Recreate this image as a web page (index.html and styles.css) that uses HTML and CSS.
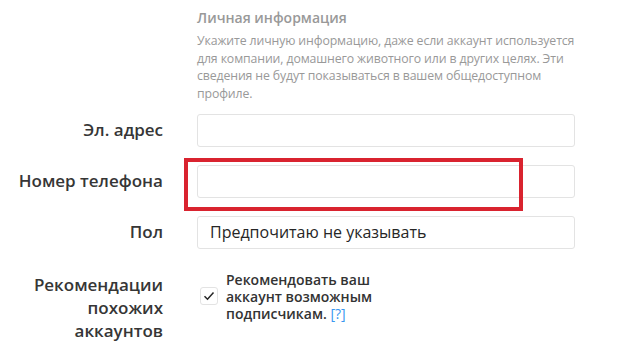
FILE: index.html
```html
<!DOCTYPE html>
<html lang="ru">

<head>
    <meta charset="UTF-8">
    <meta name="viewport" content="width=device-width, initial-scale=1.0">
    <title>Редактировать профиль</title>
    <link rel="stylesheet" href="styles.css">
</head>

<body>

    <form class="profile-form">
        <div class="form-row intro-row">
            <div class="form-label"></div>
            <div class="form-field">
                <h2 class="section-title">Личная информация</h2>
                <p class="section-hint">Укажите личную информацию, даже если аккаунт используется для компании, домашнего животного или в других целях. Эти сведения не будут показываться в вашем общедоступном профиле.</p>
            </div>
        </div>

        <div class="form-row">
            <label class="form-label" for="email">Эл. адрес</label>
            <div class="form-field">
                <input class="text-input" type="text" id="email">
            </div>
        </div>

        <div class="form-row">
            <label class="form-label" for="phone">Номер телефона</label>
            <div class="form-field">
                <input class="text-input" type="text" id="phone">
                <span class="highlight-box"></span>
            </div>
        </div>

        <div class="form-row">
            <label class="form-label" for="gender">Пол</label>
            <div class="form-field">
                <input class="text-input" type="text" id="gender" value="Предпочитаю не указывать" readonly>
            </div>
        </div>

        <div class="form-row check-row">
            <label class="form-label multi" for="suggest">Рекомендации похожих аккаунтов</label>
            <div class="form-field check-field">
                <span class="checkbox">
                    <svg width="12" height="10" viewBox="0 0 12 10">
                        <path d="M1.5 5.2 L4.5 8.2 L10.5 1.5" fill="none" stroke="#262626" stroke-width="1.5" />
                    </svg>
                </span>
                <p class="check-text">Рекомендовать ваш аккаунт возможным подписчикам. <a href="#" class="help-link">[?]</a></p>
            </div>
        </div>
    </form>

</body>

</html>
```

FILE: styles.css
```css
/* Global Styling */
body {
    font-family: 'Open Sans', 'Noto Sans', sans-serif;
    margin: 0;
    padding: 0;
    background-color: #fff;
    color: #262626;
}

.profile-form {
    display: flex;
    flex-direction: column;
    padding-top: 8px;
}

/* Rows: label column + field column */
.form-row {
    display: grid;
    grid-template-columns: 163px 378px;
    column-gap: 34px;
    align-items: center;
    margin-bottom: 18px;
}

.form-label {
    text-align: right;
    font-size: 17px;
    font-weight: 600;
    line-height: 22px;
    color: #363636;
}

.form-field {
    position: relative;
}

/* Section intro */
.intro-row {
    margin-bottom: 11px;
}

.section-title {
    margin: 0 0 4px;
    font-size: 14px;
    font-weight: 600;
    line-height: 20px;
    color: #999;
}

.section-hint {
    margin: 0;
    font-size: 12.3px;
    letter-spacing: -0.12px;
    line-height: 17.7px;
    color: #999;
}

/* Inputs */
.text-input {
    display: block;
    box-sizing: border-box;
    width: 100%;
    height: 33px;
    padding: 0 12px;
    border: 1px solid #e3e3e3;
    border-radius: 3px;
    background: #fff;
    font-family: inherit;
    font-size: 16px;
    color: #262626;
    outline: none;
}

/* Red mark drawn over the phone field */
.highlight-box {
    position: absolute;
    left: -13px;
    top: -7px;
    width: 339px;
    height: 53px;
    box-sizing: border-box;
    border: 4px solid #d9232f;
    pointer-events: none;
}

/* Checkbox row */
.check-row {
    align-items: start;
    margin-top: 4px;
}

.form-label.multi {
    justify-self: end;
    max-width: 130px;
    line-height: 23px;
    padding-top: 2px;
}

.check-field {
    display: flex;
    align-items: center;
    gap: 8px;
}

.checkbox {
    display: flex;
    align-items: center;
    justify-content: center;
    width: 16px;
    height: 16px;
    margin-left: 3px;
    border: 1px solid #e3e3e3;
    border-radius: 3px;
    flex-shrink: 0;
}

.check-text {
    width: 150px;
    margin: 0;
    font-size: 14px;
    font-weight: 600;
    line-height: 17px;
    color: #333;
}

.help-link {
    color: #3897f0;
    text-decoration: none;
    font-weight: 400;
}
```
